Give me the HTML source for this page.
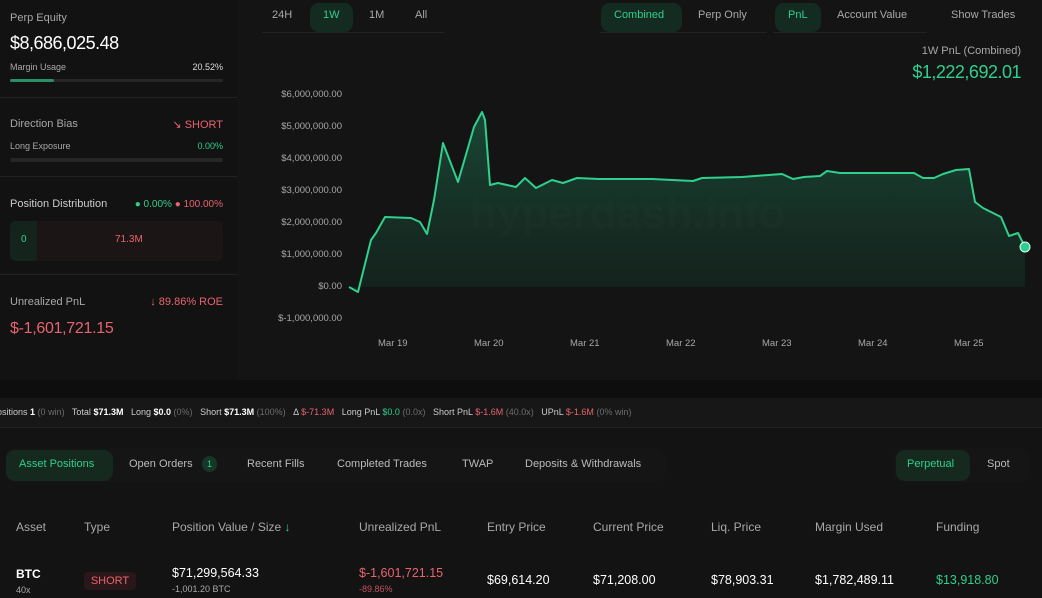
<!DOCTYPE html>
<html><head><meta charset="utf-8"><style>
*{margin:0;padding:0;box-sizing:border-box}
body{width:1042px;height:598px;background:#131313;font-family:"Liberation Sans",sans-serif;color:#e8e8e8;position:relative;overflow:hidden}
.a{position:absolute;white-space:nowrap}
.g{color:#2fcf8e}.r{color:#e8636f}.m{color:#a8a8a8}.d{color:#6c6c6c}
.hl{position:absolute;height:1px;background:#222}
.pill{position:absolute;border-radius:9px;background:#17362a}
.yl{position:absolute;right:700px;font-size:9.5px;color:#a8a8a8;text-align:right}
.rt{position:absolute;right:819px;white-space:nowrap}
</style></head><body>
<div class="a" style="left:0;top:0;width:1042px;height:380px;background:#141414"></div>
<div class="a" style="left:0;top:0;width:237px;height:380px;background:#121212"></div>
<div class="a m" style="left:10px;top:12px;font-size:11px">Perp Equity</div>
<div class="a" style="left:10px;top:33px;font-size:18px;color:#fff;letter-spacing:-0.5px">$8,686,025.48</div>
<div class="a m" style="left:10px;top:62px;font-size:9px">Margin Usage</div>
<div class="rt" style="top:62px;font-size:9px;color:#ddd">20.52%</div>
<div class="a" style="left:10px;top:79px;width:213px;height:3px;background:#262626;border-radius:2px"></div>
<div class="a" style="left:10px;top:79px;width:44px;height:3px;background:#2a8f67;border-radius:2px"></div>
<div class="hl" style="left:0;top:97px;width:237px"></div>
<div class="a m" style="left:10px;top:118px;font-size:11px">Direction Bias</div>
<div class="rt r" style="top:118px;font-size:11px">↘ SHORT</div>
<div class="a m" style="left:10px;top:141px;font-size:9px">Long Exposure</div>
<div class="rt g" style="top:141px;font-size:9px">0.00%</div>
<div class="a" style="left:10px;top:158px;width:213px;height:4px;background:#262626;border-radius:2px"></div>
<div class="hl" style="left:0;top:176px;width:237px"></div>
<div class="a" style="left:10px;top:198px;font-size:11px;color:#ccc">Position Distribution</div>
<div class="rt" style="top:199px;font-size:10px"><span class="g">● 0.00%</span> <span class="r">● 100.00%</span></div>
<div class="a" style="left:10px;top:221px;width:213px;height:40px;background:#1c1515;border-radius:6px;overflow:hidden">
<div class="a" style="left:0;top:0;width:27px;height:40px;background:#14241d"></div>
<div class="a g" style="left:11px;top:13px;font-size:10px">0</div>
<div class="a r" style="left:105px;top:13px;font-size:10px">71.3M</div></div>
<div class="hl" style="left:0;top:274px;width:237px"></div>
<div class="a m" style="left:10px;top:296px;font-size:11px">Unrealized PnL</div>
<div class="rt r" style="top:296px;font-size:11px">↓ 89.86% ROE</div>
<div class="a r" style="left:10px;top:320px;font-size:16px;letter-spacing:-0.3px">$-1,601,721.15</div>

<div class="a" style="left:262px;top:0;width:182px;height:33px;border-bottom:1px solid #222"></div>
<div class="pill" style="left:310px;top:3px;width:43px;height:29px;background:#142b21"></div>
<div class="a m" style="left:272px;top:9px;font-size:11px">24H</div>
<div class="a g" style="left:323px;top:9px;font-size:11px">1W</div>
<div class="a m" style="left:369px;top:9px;font-size:11px">1M</div>
<div class="a m" style="left:415px;top:9px;font-size:11px">All</div>
<div class="a" style="left:600px;top:0;width:167px;height:33px;border-bottom:1px solid #222"></div>
<div class="pill" style="left:601px;top:3px;width:81px;height:29px;background:#142b21"></div>
<div class="a g" style="left:614px;top:9px;font-size:11px">Combined</div>
<div class="a m" style="left:698px;top:9px;font-size:11px">Perp Only</div>
<div class="a" style="left:773px;top:0;width:154px;height:33px;border-bottom:1px solid #222"></div>
<div class="pill" style="left:775px;top:3px;width:46px;height:29px;background:#142b21"></div>
<div class="a g" style="left:788px;top:9px;font-size:11px">PnL</div>
<div class="a m" style="left:837px;top:9px;font-size:11px">Account Value</div>
<div class="a m" style="left:951px;top:9px;font-size:11px">Show Trades</div>
<div class="a m" style="right:21px;top:45px;font-size:11px">1W PnL (Combined)</div>
<div class="a g" style="right:21px;top:62px;font-size:18px;letter-spacing:-0.5px">$1,222,692.01</div>

<div class="yl" style="top:89px">$6,000,000.00</div>
<div class="yl" style="top:121px">$5,000,000.00</div>
<div class="yl" style="top:153px">$4,000,000.00</div>
<div class="yl" style="top:185px">$3,000,000.00</div>
<div class="yl" style="top:217px">$2,000,000.00</div>
<div class="yl" style="top:249px">$1,000,000.00</div>
<div class="yl" style="top:281px">$0.00</div>
<div class="yl" style="top:313px">$-1,000,000.00</div>
<div class="a m" style="left:378px;top:338px;font-size:9.5px">Mar 19</div>
<div class="a m" style="left:474px;top:338px;font-size:9.5px">Mar 20</div>
<div class="a m" style="left:570px;top:338px;font-size:9.5px">Mar 21</div>
<div class="a m" style="left:666px;top:338px;font-size:9.5px">Mar 22</div>
<div class="a m" style="left:762px;top:338px;font-size:9.5px">Mar 23</div>
<div class="a m" style="left:858px;top:338px;font-size:9.5px">Mar 24</div>
<div class="a m" style="left:954px;top:338px;font-size:9.5px">Mar 25</div>

<svg class="a" style="left:0;top:0" width="1042" height="380">
<defs><linearGradient id="gr" x1="0" y1="0" x2="0" y2="1"><stop offset="0" stop-color="#1f7a57" stop-opacity=".5"/><stop offset="1" stop-color="#143a2b" stop-opacity=".35"/></linearGradient></defs>
<path d="M349,287 L358,292 L371,240 L376,233 L385,217 L411,218 L420,222 L427,234 L434,200 L443,143 L458,182 L474,127 L482,112 L485,120 L490,185 L498,183 L516,187 L525,178 L536,188 L552,180 L563,183 L577,178 L599,179 L635,179 L652,179 L693,181 L702,178 L742,177 L782,174 L793,179 L804,177 L820,176 L827,171 L840,173 L914,173 L923,178 L934,178 L943,174 L956,170 L969,169 L975,202 L983,208 L1001,217 L1009,236 L1018,233 L1025,247 L1025,287 Z" fill="url(#gr)"/>
<text x="470" y="228" font-family="Liberation Sans" font-size="44" font-weight="bold" fill="#2a4a3c" fill-opacity=".12">hyperdash.info</text>
<path d="M349,287 L358,292 L371,240 L376,233 L385,217 L411,218 L420,222 L427,234 L434,200 L443,143 L458,182 L474,127 L482,112 L485,120 L490,185 L498,183 L516,187 L525,178 L536,188 L552,180 L563,183 L577,178 L599,179 L635,179 L652,179 L693,181 L702,178 L742,177 L782,174 L793,179 L804,177 L820,176 L827,171 L840,173 L914,173 L923,178 L934,178 L943,174 L956,170 L969,169 L975,202 L983,208 L1001,217 L1009,236 L1018,233 L1025,247" fill="none" stroke="#2fcf8e" stroke-width="2" stroke-linejoin="round"/>
<circle cx="1025" cy="247" r="5" fill="#2fcf8e" stroke="#dff" stroke-width="1"/>
</svg>

<div class="a" style="left:0;top:380px;width:1042px;height:18px;background:#0e0e0e"></div>
<div class="a" style="left:0;top:398px;width:1042px;height:30px;background:#171717;border-bottom:1px solid #222"></div>
<div class="a" style="left:-3px;top:407px;font-size:9px;color:#ccc">ositions <b style="color:#fff">1</b> <span class="d">(0 win)</span> &nbsp; Total <b style="color:#fff">$71.3M</b> &nbsp; Long <b style="color:#fff">$0.0</b> <span class="d">(0%)</span> &nbsp; Short <b style="color:#fff">$71.3M</b> <span class="d">(100%)</span> &nbsp; Δ <span class="r">$-71.3M</span> &nbsp; Long PnL <span class="g">$0.0</span> <span class="d">(0.0x)</span> &nbsp; Short PnL <span class="r">$-1.6M</span> <span class="d">(40.0x)</span> &nbsp; UPnL <span class="r">$-1.6M</span> <span class="d">(0% win)</span></div>

<div class="a" style="left:5px;top:448px;width:660px;height:34px;background:#151515;border-radius:9px"></div>
<div class="pill" style="left:6px;top:450px;width:107px;height:31px;background:#15291f"></div>
<div class="a g" style="left:19px;top:458px;font-size:11px">Asset Positions</div>
<div class="a" style="left:129px;top:458px;font-size:11px;color:#bbb">Open Orders</div>
<div class="a g" style="left:202px;top:456px;width:15px;height:16px;border-radius:8px;background:#17362a;font-size:9px;text-align:center;line-height:16px">1</div>
<div class="a" style="left:247px;top:458px;font-size:11px;color:#bbb">Recent Fills</div>
<div class="a" style="left:337px;top:458px;font-size:11px;color:#bbb">Completed Trades</div>
<div class="a" style="left:462px;top:458px;font-size:11px;color:#bbb">TWAP</div>
<div class="a" style="left:525px;top:458px;font-size:11px;color:#bbb">Deposits &amp; Withdrawals</div>
<div class="a" style="left:894px;top:448px;width:136px;height:34px;background:#151515;border-radius:9px"></div>
<div class="pill" style="left:896px;top:450px;width:74px;height:31px;background:#15291f"></div>
<div class="a g" style="left:907px;top:458px;font-size:11px">Perpetual</div>
<div class="a" style="left:987px;top:458px;font-size:11px;color:#bbb">Spot</div>

<div class="a m" style="left:16px;top:520px;font-size:12px">Asset</div>
<div class="a m" style="left:84px;top:520px;font-size:12px">Type</div>
<div class="a m" style="left:172px;top:520px;font-size:12px">Position Value / Size <span class="g">↓</span></div>
<div class="a m" style="left:359px;top:520px;font-size:12px">Unrealized PnL</div>
<div class="a m" style="left:487px;top:520px;font-size:12px">Entry Price</div>
<div class="a m" style="left:593px;top:520px;font-size:12px">Current Price</div>
<div class="a m" style="left:711px;top:520px;font-size:12px">Liq. Price</div>
<div class="a m" style="left:815px;top:520px;font-size:12px">Margin Used</div>
<div class="a m" style="left:936px;top:520px;font-size:12px">Funding</div>

<div class="a" style="left:16px;top:567px;font-size:12px;font-weight:bold;color:#fff">BTC</div>
<div class="a m" style="left:16px;top:585px;font-size:9px">40x</div>
<div class="a r" style="left:84px;top:572px;width:52px;height:18px;background:#2a1719;border-radius:4px;font-size:11px;text-align:center;line-height:18px">SHORT</div>
<div class="a" style="left:172px;top:566px;font-size:12.5px;color:#fff">$71,299,564.33</div>
<div class="a m" style="left:172px;top:584px;font-size:9px">-1,001.20 BTC</div>
<div class="a r" style="left:359px;top:566px;font-size:12.5px">$-1,601,721.15</div>
<div class="a r" style="left:359px;top:584px;font-size:9px;opacity:.8">-89.86%</div>
<div class="a" style="left:487px;top:573px;font-size:12.5px;color:#fff">$69,614.20</div>
<div class="a" style="left:593px;top:573px;font-size:12.5px;color:#fff">$71,208.00</div>
<div class="a" style="left:711px;top:573px;font-size:12.5px;color:#fff">$78,903.31</div>
<div class="a" style="left:815px;top:573px;font-size:12.5px;color:#fff">$1,782,489.11</div>
<div class="a g" style="left:936px;top:573px;font-size:12.5px">$13,918.80</div>
</body></html>
